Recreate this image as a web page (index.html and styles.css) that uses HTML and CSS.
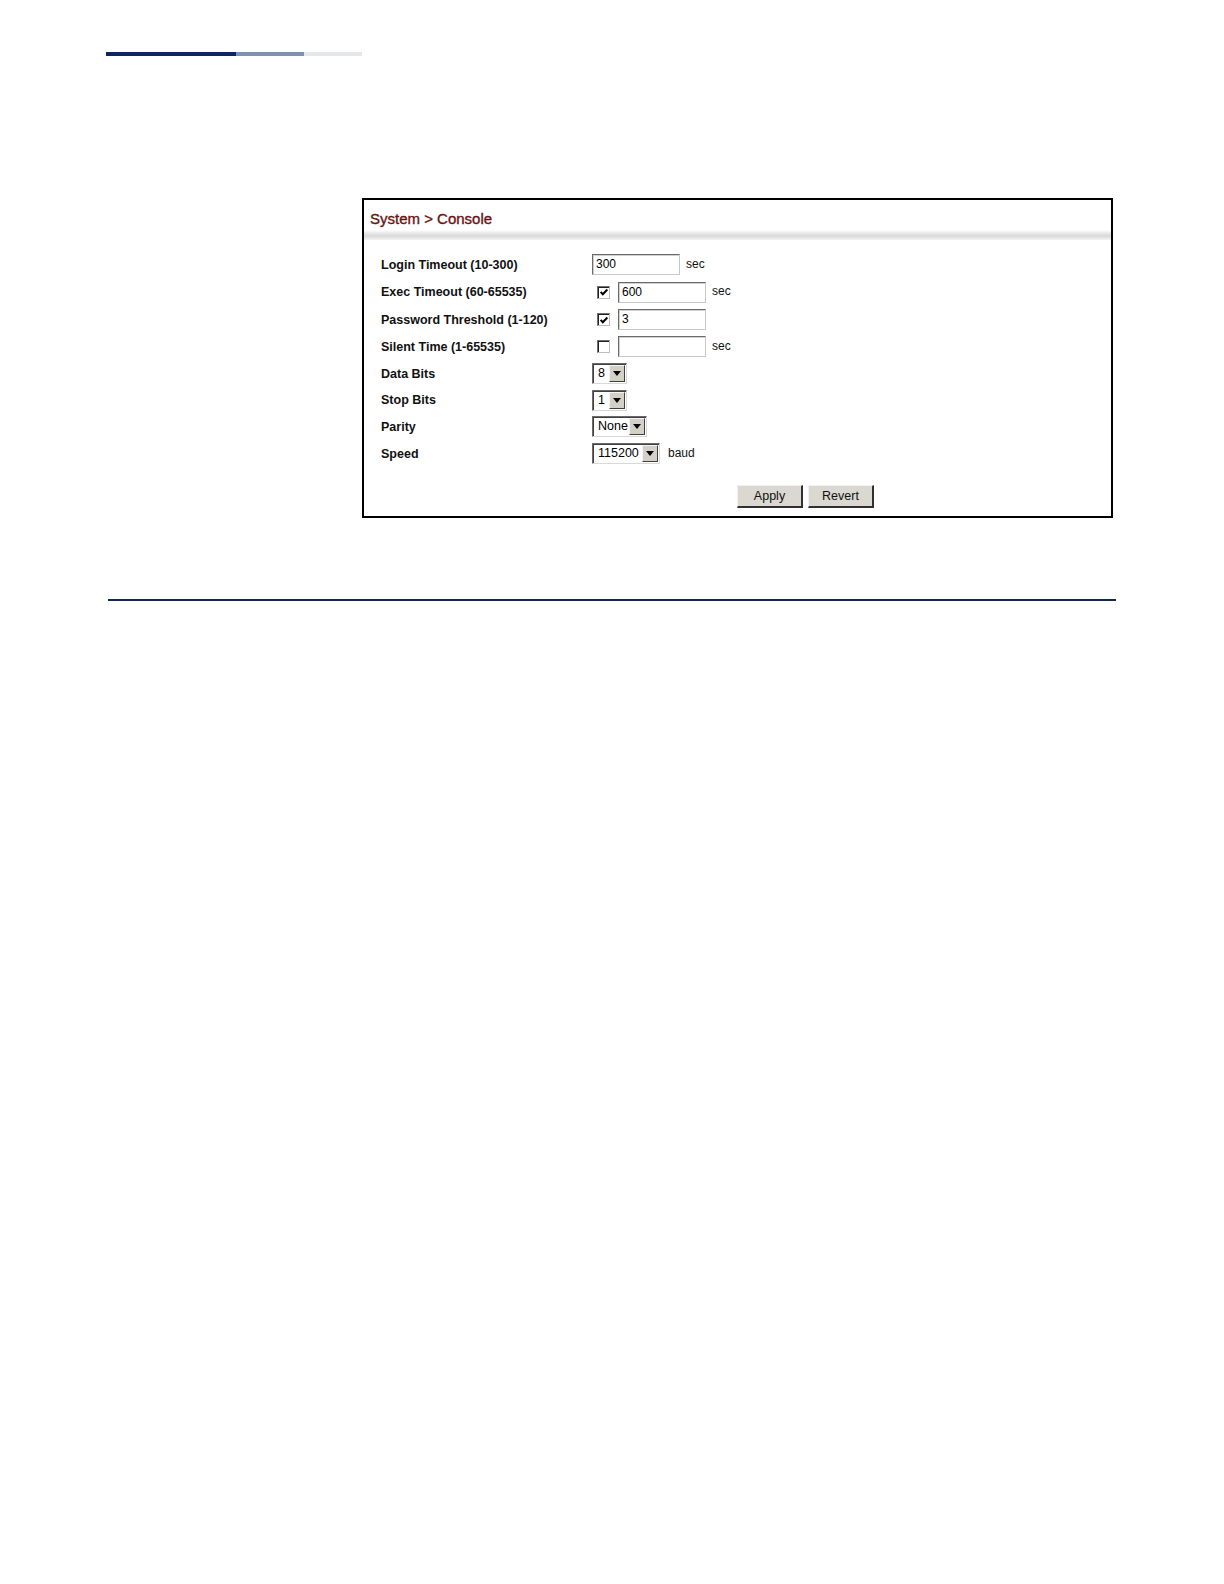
FILE: index.html
```html
<!DOCTYPE html>
<html>
<head>
<meta charset="utf-8">
<link rel="stylesheet" href="styles.css">
</head>
<body>
<div class="topbars">
  <div class="bar bar-dark"></div>
  <div class="bar bar-mid"></div>
  <div class="bar bar-light"></div>
</div>

<div class="panel">
  <div class="title">System &gt; Console</div>
  <div class="band"></div>
  <div class="form">
    <div class="row h27">
      <div class="label">Login Timeout (10-300)</div>
      <div class="ctrl"><span class="input w88">300</span><span class="unit">sec</span></div>
    </div>
    <div class="row h28">
      <div class="label">Exec Timeout (60-65535)</div>
      <div class="ctrl"><span class="cb"><svg viewBox="0 0 11 11" width="11" height="11"><path d="M1.8 4.8 L4.2 7.4 L9.2 2.2" fill="none" stroke="#000" stroke-width="2.2"/></svg></span><span class="input w88">600</span><span class="unit">sec</span></div>
    </div>
    <div class="row h27">
      <div class="label">Password Threshold (1-120)</div>
      <div class="ctrl"><span class="cb"><svg viewBox="0 0 11 11" width="11" height="11"><path d="M1.8 4.8 L4.2 7.4 L9.2 2.2" fill="none" stroke="#000" stroke-width="2.2"/></svg></span><span class="input w88">3</span></div>
    </div>
    <div class="row h27">
      <div class="label">Silent Time (1-65535)</div>
      <div class="ctrl"><span class="cb"></span><span class="input w88"></span><span class="unit">sec</span></div>
    </div>
    <div class="row h27">
      <div class="label">Data Bits</div>
      <div class="ctrl"><span class="select s-8"><span class="val">8</span><span class="arrow"><svg viewBox="0 0 8 5" width="8" height="5"><path d="M0 0 H8 L4 5 Z" fill="#000"/></svg></span></span></div>
    </div>
    <div class="row h26">
      <div class="label">Stop Bits</div>
      <div class="ctrl"><span class="select s-8"><span class="val">1</span><span class="arrow"><svg viewBox="0 0 8 5" width="8" height="5"><path d="M0 0 H8 L4 5 Z" fill="#000"/></svg></span></span></div>
    </div>
    <div class="row h27">
      <div class="label">Parity</div>
      <div class="ctrl"><span class="select s-none"><span class="val">None</span><span class="arrow"><svg viewBox="0 0 8 5" width="8" height="5"><path d="M0 0 H8 L4 5 Z" fill="#000"/></svg></span></span></div>
    </div>
    <div class="row h27">
      <div class="label">Speed</div>
      <div class="ctrl"><span class="select s-speed"><span class="val">115200</span><span class="arrow"><svg viewBox="0 0 8 5" width="8" height="5"><path d="M0 0 H8 L4 5 Z" fill="#000"/></svg></span></span><span class="unit baud">baud</span></div>
    </div>
  </div>
  <div class="buttons">
    <span class="btn">Apply</span>
    <span class="btn">Revert</span>
  </div>
</div>

<div class="rule"></div>
</body>
</html>
```

FILE: styles.css
```css
html, body {
  margin: 0;
  padding: 0;
  background: #fff;
}
body {
  font-family: "Liberation Sans", Arial, sans-serif;
  color: #000;
}
.topbars {
  display: flex;
  margin: 52px 0 0 106px;
  height: 4px;
}
.bar { height: 4px; }
.bar-dark { width: 130px; background: #0b2663; }
.bar-mid { width: 68px; background: #8090b0; }
.bar-light { width: 58px; background: #e5e6e9; }

.panel {
  box-sizing: border-box;
  margin: 142px 0 0 362px;
  width: 751px;
  height: 320px;
  border: 2px solid #000;
}
.title {
  box-sizing: border-box;
  padding: 10px 0 0 6px;
  height: 30px;
  line-height: 18px;
  font-size: 15px;
  color: #6a1212;
  -webkit-text-stroke: 0.35px #6a1212;
}
.band {
  height: 10px;
  background: linear-gradient(to bottom, #fff 0%, #e6e6e6 35%, #d9d9d9 60%, #f3f3f3 100%);
}
.form {
  margin-top: 11px;
  padding-left: 17px;
}
.row {
  display: flex;
  align-items: center;
}
.h26 { height: 26px; }
.h27 { height: 27px; }
.h28 { height: 28px; }
.label {
  width: 211px;
  font-size: 12.5px;
  font-weight: bold;
  color: #111;
}
.ctrl {
  display: flex;
  align-items: center;
}
.input {
  box-sizing: border-box;
  display: inline-block;
  height: 21px;
  line-height: 19px;
  padding-left: 3px;
  font-size: 12px;
  border-top: 1px solid #6a6a6a;
  border-left: 1px solid #6a6a6a;
  border-right: 1px solid #c8c8c8;
  border-bottom: 1px solid #c8c8c8;
  box-shadow: inset 1px 1px 0 #d0d0d0;
  background: #fff;
}
.w88 { width: 88px; }
.unit {
  margin-left: 6px;
  font-size: 12px;
  color: #111;
  position: relative;
  top: -1px;
}
.baud { margin-left: 8px; }
.cb {
  box-sizing: border-box;
  width: 13px;
  height: 13px;
  margin: 0 8px 0 5px;
  border-top: 1px solid #707070;
  border-left: 1px solid #707070;
  border-right: 1px solid #bdbdbd;
  border-bottom: 1px solid #bdbdbd;
  box-shadow: inset 1px 1px 0 #202020;
  background: #fff;
  display: inline-flex;
  align-items: center;
  justify-content: center;
}
.cb svg { display: block; margin: 1px 0 0 1px; }
.select {
  box-sizing: border-box;
  display: inline-flex;
  align-items: center;
  justify-content: space-between;
  height: 21px;
  padding: 1px;
  border-top: 1px solid #6a6a6a;
  border-left: 1px solid #6a6a6a;
  border-right: 1px solid #d8d8d8;
  border-bottom: 1px solid #d8d8d8;
  box-shadow: inset 1px 1px 0 #404040;
  background: #fff;
}
.s-8 { width: 35px; }
.s-none { width: 55px; }
.s-speed { width: 68px; }
.val {
  font-size: 12.5px;
  padding: 0 0 0 4px;
  line-height: 17px;
}
.arrow {
  box-sizing: border-box;
  width: 16px;
  height: 17px;
  background: #d4d0c8;
  border-top: 1px solid #f4f4f4;
  border-left: 1px solid #f4f4f4;
  border-right: 1px solid #404040;
  border-bottom: 1px solid #404040;
  display: inline-flex;
  align-items: center;
  justify-content: center;
}
.arrow svg { display: block; }
.buttons {
  display: flex;
  gap: 5px;
  margin-top: 18px;
  padding-left: 373px;
}
.btn {
  box-sizing: border-box;
  width: 66px;
  height: 23px;
  display: inline-flex;
  align-items: center;
  justify-content: center;
  font-size: 12.5px;
  background: #dad8d0;
  border-top: 1px solid #f2f2f2;
  border-left: 1px solid #f2f2f2;
  border-right: 2px solid #303030;
  border-bottom: 2px solid #303030;
  color: #111;
}
.rule {
  margin: 81px 0 0 108px;
  width: 1008px;
  height: 2px;
  background: #0e2a50;
}
```
